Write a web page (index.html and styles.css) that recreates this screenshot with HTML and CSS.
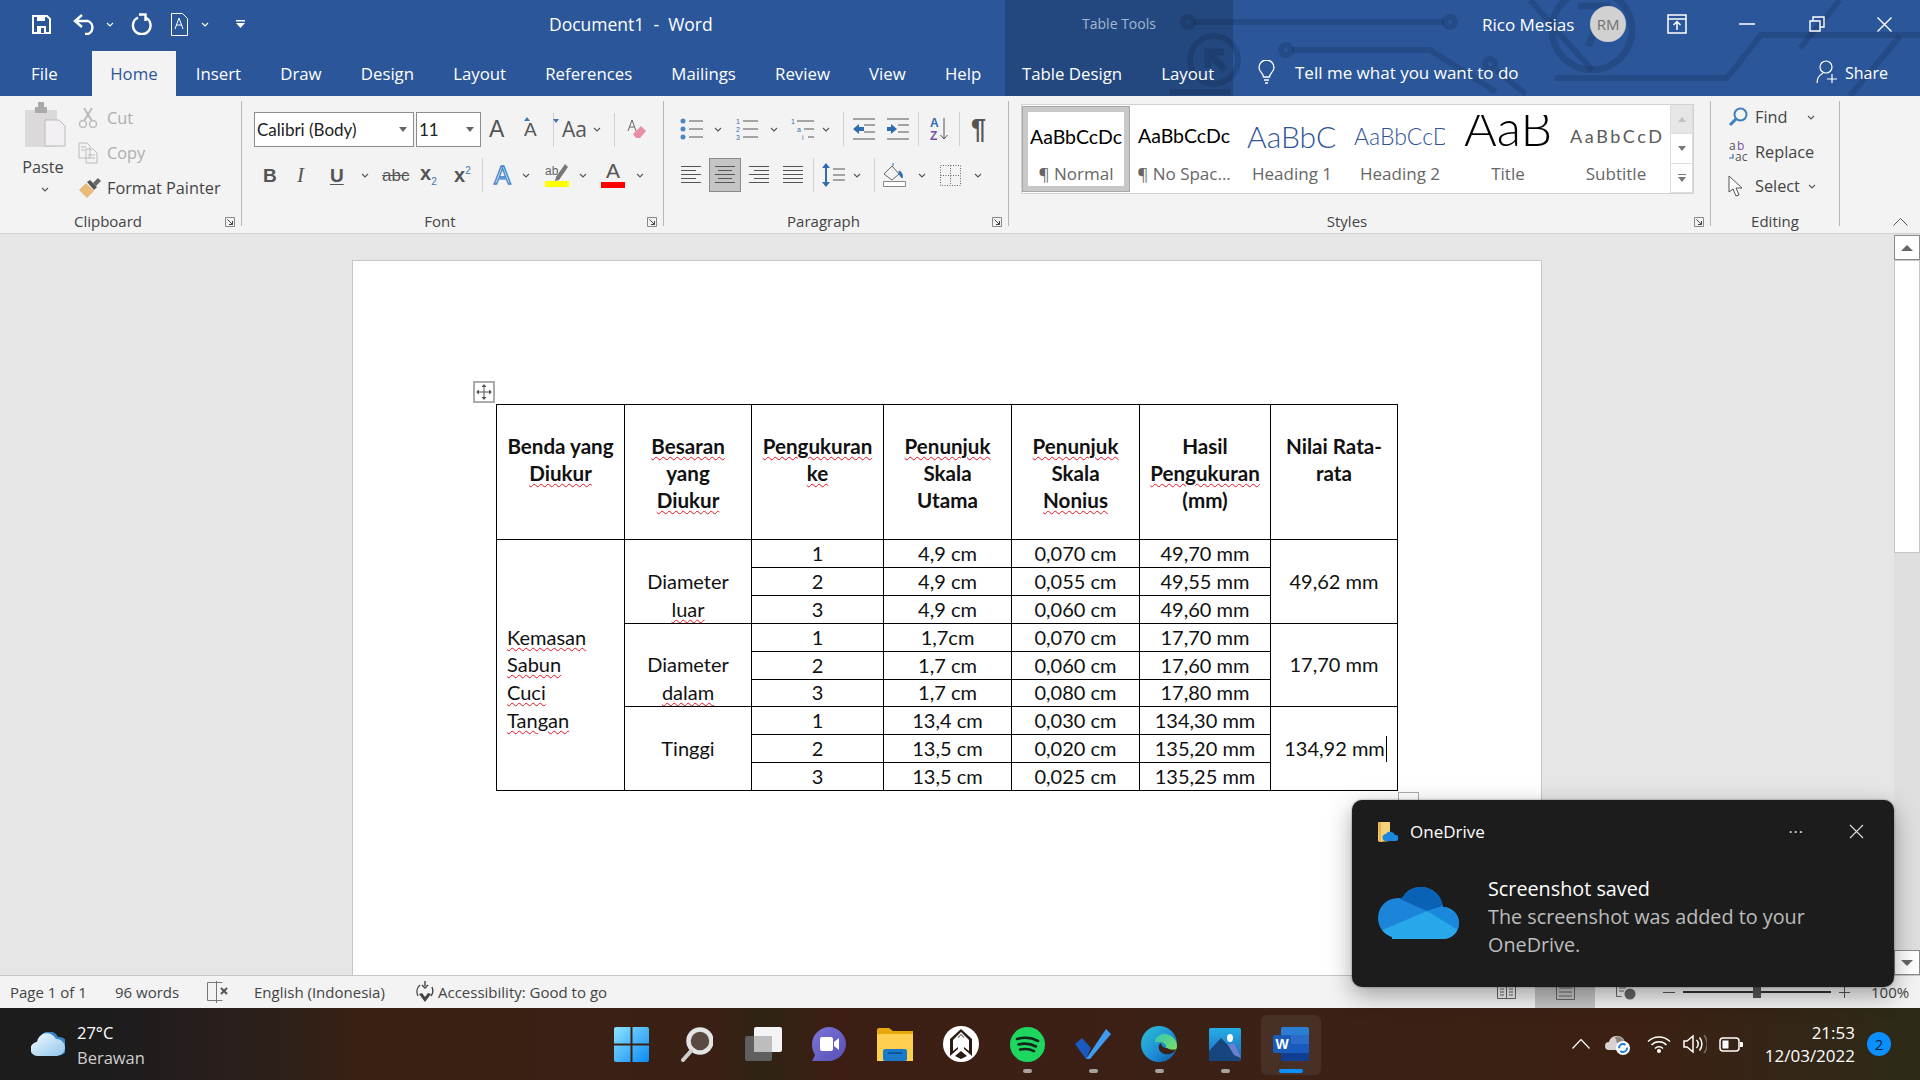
FILE: index.html
```html
<!DOCTYPE html>
<html lang="en">
<head>
  <meta charset="UTF-8">
  <title>Document1 - Word</title>
  <link rel="stylesheet" href="styles.css">
</head>
<body>

<svg class="sprite" width="0" height="0">
  <symbol id="chev" viewBox="0 0 8 5"><path d="M1 1l3 3 3-3" fill="none" stroke="#555" stroke-width="1.1"/></symbol>
  <symbol id="launch" viewBox="0 0 10 10"><path d="M.5 9.5v-9h9v9z" fill="none" stroke="#888"/><path d="M2.5 2.5l5 5M4 7.5h3.5V4" fill="none" stroke="#444"/></symbol>
  <symbol id="lines" viewBox="0 0 20 20"><path d="M0 1.500h20M0 5.500h20M0 9.500h20M0 13.500h20M0 17.500h20" stroke="#555"/></symbol>
</svg>

<div class="app">

  <!-- Cabecera azul -->
  <header class="header">
    <svg class="circuit" width="1920" height="96" viewBox="0 0 1920 96">
      <g fill="none" stroke="#000" stroke-opacity=".13" stroke-width="6">
        <circle cx="1188" cy="22" r="5"/>
        <path d="M1194 22h250"/><circle cx="1450" cy="22" r="5"/>
        <circle cx="1214" cy="60" r="24"/>
        <path d="M1208 68V52h16M1208 52l17 18" stroke-width="7"/>
        <circle cx="1286" cy="50" r="5"/>
        <path d="M1292 50h138l66 42M1170 92h60"/>
        <circle cx="1592" cy="30" r="40" stroke-width="7"/>
        <path d="M1578 6h28l-18 40" stroke-width="7"/>
        <path d="M1555 78h172l34-43h159"/>
        <circle cx="1490" cy="64" r="5"/>
        <path d="M1496 70l30 24M1530 0l62 70"/>
        <path d="M1800 48l40-48M1850 96l50-60"/>
      </g>
    </svg>

    <div class="titlebar">
      <svg width="19" height="19" viewBox="0 0 19 19"><path d="M1 1h14l3 3v14H1z" fill="none" stroke="#fff" stroke-width="2"/><path d="M5 1h8v5H5zM5 11h9v7H5z" fill="#fff"/><path d="M9 13h3v5H9z" fill="#2b579a"/></svg>
      <svg width="24" height="22" viewBox="0 0 24 22"><path d="M9 2L2 8l7 6M2 8h13a7 7 0 0 1 0 13h-3" fill="none" stroke="#fff" stroke-width="2.4"/></svg>
      <svg class="chev-w" width="8" height="5"><use href="#chev"/></svg>
      <svg width="21" height="22" viewBox="0 0 21 22"><path d="M7 4.500a8.800 8.800 0 1 0 7.500 0M8 1.500h6.500V8" fill="none" stroke="#fff" stroke-width="2.400"/></svg>
      <svg width="17" height="23" viewBox="0 0 17 23"><path d="M.5.500h11l5 5v17H.5z" fill="none" stroke="#fff"/><path d="M4 16L8 5l4 11M5.500 12h5" fill="none" stroke="#fff"/></svg>
      <svg class="chev-w" width="8" height="5"><use href="#chev"/></svg>
      <svg width="9" height="8" viewBox="0 0 9 8"><path d="M0 0h9v1.500H0zM0 3h9L4.500 8z" fill="#fff"/></svg>
      <div class="doc-title">Document1&nbsp; -&nbsp; Word</div>
      <div class="ctx-title">Table Tools</div>
      <div class="user-name">Rico Mesias</div>
      <div class="avatar">RM</div>
      <svg width="20" height="20" viewBox="0 0 20 20"><path d="M1 1h18v18H1zM1 5h18" fill="none" stroke="#fff" stroke-width="1.5"/><path d="M10 16V8M6.500 11L10 7.500l3.500 3.500" fill="none" stroke="#fff" stroke-width="1.5"/></svg>
      <svg width="16" height="2" viewBox="0 0 16 2"><path d="M0 1h16" stroke="#fff" stroke-width="1.5"/></svg>
      <svg width="16" height="16" viewBox="0 0 16 16"><path d="M1 5h10v10H1zM4 5V1h11v10h-4" fill="none" stroke="#fff" stroke-width="1.4"/></svg>
      <svg width="15" height="15" viewBox="0 0 15 15"><path d="M.5.500l14 14M14.500.500l-14 14" stroke="#fff" stroke-width="1.4"/></svg>
    </div>

    <nav class="tabbar">
      <div class="main-tabs">
        <div class="tab">File</div>
        <div class="tab active">Home</div>
        <div class="tab">Insert</div>
        <div class="tab">Draw</div>
        <div class="tab">Design</div>
        <div class="tab">Layout</div>
        <div class="tab">References</div>
        <div class="tab">Mailings</div>
        <div class="tab">Review</div>
        <div class="tab">View</div>
        <div class="tab">Help</div>
      </div>
      <div class="ctx-tabs">
        <div class="tab">Table Design</div>
        <div class="tab">Layout</div>
      </div>
      <svg class="bulb" width="17" height="24" viewBox="0 0 17 24"><path d="M5.500 17c0-4-4.500-5-4.500-9.500a7.500 7.500 0 0 1 15 0C16 12 11.500 13 11.500 17zM6 20h5M7 23h3" fill="none" stroke="#fff" stroke-width="1.3"/></svg>
      <div class="tell-me">Tell me what you want to do</div>
      <svg class="share-ic" width="21" height="24" viewBox="0 0 21 24"><circle cx="10" cy="7" r="6" fill="none" stroke="#fff" stroke-width="1.2"/><path d="M1 23c0-6 3-8 6-10M21 19H11M16 14v9" fill="none" stroke="#fff" stroke-width="1.2"/></svg>
      <div class="share">Share</div>
    </nav>
  </header>

  <!-- Cinta de opciones -->
  <section class="ribbon">

    <div class="group clipboard">
      <div class="group-body clip-body">
        <div class="paste">
          <svg width="41" height="45" viewBox="0 0 41 45"><path d="M0 8h32v37H0z" fill="#dcd9da"/><path d="M10 5h12v6H10z" fill="#aaa"/><path d="M13 0h6v6h-6z" fill="#aaa"/><path d="M20 18h14l6 6v20H20z" fill="#f3eff4" stroke="#bbb"/></svg>
          <div class="paste-label">Paste</div>
          <svg width="8" height="5"><use href="#chev"/></svg>
        </div>
        <ul class="clip-list">
          <li class="disabled">
            <svg width="20" height="21" viewBox="0 0 20 21"><circle cx="5" cy="17" r="3.5" fill="none" stroke="#bbb" stroke-width="1.5"/><circle cx="15" cy="17" r="3.5" fill="none" stroke="#bbb" stroke-width="1.5"/><path d="M6 14L14 1M14 14L6 1" stroke="#bbb" stroke-width="2"/></svg>
            Cut
          </li>
          <li class="disabled">
            <svg width="20" height="22" viewBox="0 0 20 22"><path d="M1 1h8l3 3v12H1zM8 7h7l4 4v10H8z" fill="#f3f3f3" stroke="#bbb"/><path d="M3 5h5M3 8h4M10 13h7M10 16h7" stroke="#bbb"/></svg>
            Copy
          </li>
          <li>
            <svg width="24" height="21" viewBox="0 0 24 21"><path d="M1 13l7-7 8 8-7 7z" fill="#e9bb78"/><path d="M9 5l7 8 3-3-7-7z" fill="#555"/><path d="M15 6l5-5 3 3-5 5z" fill="#666"/></svg>
            Format Painter
          </li>
        </ul>
      </div>
      <div class="group-label"><span>Clipboard</span><svg class="launcher" width="10" height="10"><use href="#launch"/></svg></div>
    </div>

    <div class="group font">
      <div class="group-body">
        <div class="tool-row font-row1">
          <div class="combo combo-name">Calibri (Body)<i></i></div>
          <div class="combo combo-size">11<i></i></div>
          <div class="glyph big-a">A<b class="tri-up"></b></div>
          <div class="glyph small-a">A<b class="tri-down"></b></div>
          <div class="sep"></div>
          <div class="glyph case-a">Aa</div>
          <svg width="8" height="5"><use href="#chev"/></svg>
          <div class="sep"></div>
          <svg width="20" height="22" viewBox="0 0 20 22"><path d="M1 12L5 1l4 11M2.500 8h5" fill="none" stroke="#666"/><path d="M9 19l-3-4 8-8 5 5-6 7z" fill="#e88fa4"/></svg>
        </div>
        <div class="tool-row font-row2">
          <div class="glyph fmt-b">B</div>
          <div class="glyph fmt-i">I</div>
          <div class="glyph fmt-u">U</div>
          <svg width="8" height="5"><use href="#chev"/></svg>
          <div class="glyph fmt-s">abc</div>
          <div class="glyph fmt-x">x<sub>2</sub></div>
          <div class="glyph fmt-x">x<sup>2</sup></div>
          <div class="sep"></div>
          <div class="glyph fmt-effect">A</div>
          <svg width="8" height="5"><use href="#chev"/></svg>
          <svg width="24" height="24" viewBox="0 0 24 24"><text x="0" y="12" font-family="Liberation Sans" font-size="12" fill="#666">ab</text><path d="M11 14l9-13 3 3-9 13-4 1z" fill="#777"/><path d="M0 18h24v6H0z" fill="#ff0"/></svg>
          <svg width="8" height="5"><use href="#chev"/></svg>
          <div class="font-color">A<i></i></div>
          <svg width="8" height="5"><use href="#chev"/></svg>
        </div>
      </div>
      <div class="group-label"><span>Font</span><svg class="launcher" width="10" height="10"><use href="#launch"/></svg></div>
    </div>

    <div class="group paragraph">
      <div class="group-body">
        <div class="tool-row para-row1">
          <svg width="23" height="22" viewBox="0 0 23 22"><g fill="#4a86c5"><circle cx="3" cy="3" r="2.5"/><circle cx="3" cy="11" r="2.5"/><circle cx="3" cy="19" r="2.5"/></g><path d="M9 3h14M9 11h14M9 19h14" stroke="#555"/></svg>
          <svg width="8" height="5"><use href="#chev"/></svg>
          <svg width="23" height="22" viewBox="0 0 23 22"><g fill="#2e6cb0" font-family="Liberation Sans" font-size="7"><text x="1" y="6">1</text><text x="1" y="14">2</text><text x="1" y="22">3</text></g><path d="M8 3h15M8 11h15M8 19h15" stroke="#555"/></svg>
          <svg width="8" height="5"><use href="#chev"/></svg>
          <svg width="23" height="22" viewBox="0 0 23 22"><g fill="#2e6cb0" font-family="Liberation Sans" font-size="7"><text x="0" y="6">1</text><text x="6" y="14">a</text><text x="11" y="22">i</text></g><path d="M6 3h17M13 11h10M17 19h6" stroke="#555"/></svg>
          <svg width="8" height="5"><use href="#chev"/></svg>
          <div class="sep"></div>
          <svg width="22" height="22" viewBox="0 0 22 22"><path d="M0 1h22M11 7h11M11 14h11M0 21h22" stroke="#555"/><path d="M0 11l6-5v3h5v4H6v3z" fill="#2e6cb0"/></svg>
          <svg width="22" height="22" viewBox="0 0 22 22"><path d="M0 1h22M11 7h11M11 14h11M0 21h22" stroke="#555"/><path d="M10 11L4 6v3H0v4h4v3z" fill="#2e6cb0"/></svg>
          <div class="sep"></div>
          <svg width="18" height="24" viewBox="0 0 18 24"><text x="0" y="10" font-family="Liberation Sans" font-weight="700" font-size="12" fill="#2e6cb0">A</text><text x="0" y="23" font-family="Liberation Sans" font-weight="700" font-size="12" fill="#7b4ea3">Z</text><path d="M14 1v21M10.500 18l3.500 4 3.500-4" fill="none" stroke="#555"/></svg>
          <div class="sep"></div>
          <div class="pilcrow">¶</div>
        </div>
        <div class="tool-row para-row2">
          <svg class="align" width="20" height="20" viewBox="0 0 20 20"><path d="M0 1.500h20M0 5.500h15M0 9.500h20M0 13.500h15M0 17.500h20" stroke="#555"/></svg>
          <div class="align-on"><svg width="20" height="20" viewBox="0 0 20 20"><path d="M0 1.500h20M3 5.500h14M0 9.500h20M3 13.500h14M0 17.500h20" stroke="#555"/></svg></div>
          <svg width="20" height="20" viewBox="0 0 20 20"><path d="M0 1.500h20M5 5.500h15M0 9.500h20M5 13.500h15M0 17.500h20" stroke="#555"/></svg>
          <svg width="20" height="20"><use href="#lines"/></svg>
          <div class="sep"></div>
          <svg width="23" height="24" viewBox="0 0 23 24"><path d="M4 0l4 5H5v14h3l-4 5-4-5h3V5H0z" fill="#2e6cb0"/><path d="M11 6h12M11 12h12M11 17h12" stroke="#555"/></svg>
          <svg width="8" height="5"><use href="#chev"/></svg>
          <div class="sep"></div>
          <svg width="23" height="24" viewBox="0 0 23 24"><path d="M1 11l8-8 7 8-7 6z" fill="none" stroke="#666"/><path d="M10 3V0M16 8c3 1 4 5 3 7-2-2-3-4-3-7z" stroke="#2e6cb0" fill="#2e6cb0"/><path d="M.5 18.500h22v5H.5z" fill="#fff" stroke="#888"/></svg>
          <svg width="8" height="5"><use href="#chev"/></svg>
          <svg width="21" height="21" viewBox="0 0 21 21"><path d="M.5.500h20v20H.5zM.5 10.500h20M10.500.5v20" fill="none" stroke="#666" stroke-dasharray="1 1.5"/></svg>
          <svg width="8" height="5"><use href="#chev"/></svg>
        </div>
      </div>
      <div class="group-label"><span>Paragraph</span><svg class="launcher" width="10" height="10"><use href="#launch"/></svg></div>
    </div>

    <div class="group styles">
      <div class="group-body">
        <div class="gallery">
          <div class="style-item selected"><div class="preview pv-normal">AaBbCcDc</div><div class="style-name">¶ Normal</div></div>
          <div class="style-item"><div class="preview pv-normal">AaBbCcDc</div><div class="style-name">¶ No Spac...</div></div>
          <div class="style-item"><div class="preview pv-h1">AaBbCc</div><div class="style-name">Heading 1</div></div>
          <div class="style-item"><div class="preview pv-h2">AaBbCcD</div><div class="style-name">Heading 2</div></div>
          <div class="style-item"><div class="preview pv-title">AaB</div><div class="style-name">Title</div></div>
          <div class="style-item"><div class="preview pv-sub">AaBbCcD</div><div class="style-name">Subtitle</div></div>
          <div class="gallery-scroll">
            <div class="gs-btn gs-up"><b class="tri-gs up"></b></div>
            <div class="gs-btn"><b class="tri-gs"></b></div>
            <div class="gs-btn"><b class="gs-more"></b><b class="tri-gs"></b></div>
          </div>
        </div>
      </div>
      <div class="group-label"><span>Styles</span><svg class="launcher" width="10" height="10"><use href="#launch"/></svg></div>
    </div>

    <div class="group editing">
      <div class="group-body edit-body">
        <div class="edit-row">
          <svg width="20" height="20" viewBox="0 0 20 20"><circle cx="12.5" cy="7.500" r="6" fill="none" stroke="#3f7fbf" stroke-width="2"/><path d="M8 12l-6 6" stroke="#3f7fbf" stroke-width="3"/></svg>
          <span>Find</span>
          <svg class="edit-chev" width="8" height="5"><use href="#chev"/></svg>
        </div>
        <div class="edit-row">
          <svg width="23" height="22" viewBox="0 0 23 22"><text x="1" y="9" font-family="Open Sans" font-size="12" fill="#555">a</text><text x="9" y="9" font-family="Open Sans" font-size="12" fill="#7b4ea3">b</text><text x="7" y="20" font-family="Open Sans" font-size="12" fill="#555">ac</text><path d="M5 13v4H1" fill="none" stroke="#2e6cb0" stroke-width="1.2"/></svg>
          <span>Replace</span>
        </div>
        <div class="edit-row">
          <svg width="16" height="22" viewBox="0 0 16 22"><path d="M1 1v16l4-3 3 7 3-1-3-7h6z" fill="#fff" stroke="#555"/></svg>
          <span>Select</span>
          <svg class="edit-chev2" width="8" height="5"><use href="#chev"/></svg>
        </div>
      </div>
      <div class="group-label"><span>Editing</span></div>
    </div>

    <div class="collapse">
      <svg width="15" height="8" viewBox="0 0 15 8"><path d="M.5 7.500l7-7 7 7" fill="none" stroke="#555"/></svg>
    </div>
  </section>

  <!-- Zona del documento -->
  <main class="doc-area">
    <div class="page">
      <div class="table-wrap">
        <div class="move-handle">
          <svg width="16" height="16" viewBox="0 0 16 16"><path d="M8 0l2.500 3h-5zM8 16l-2.500-3h5zM0 8l3-2.500v5zM16 8l-3-2.500v5z" fill="#555"/><path d="M8 2v12M2 8h12" stroke="#555"/></svg>
        </div>
        <table class="data">
          <colgroup><col class="c1"><col class="c2"><col class="c3"><col class="c4"><col class="c5"><col class="c6"><col class="c7"></colgroup>
          <tr class="head">
            <th>Benda yang<br><u>Diukur</u></th>
            <th><u>Besaran</u><br>yang<br><u>Diukur</u></th>
            <th><u>Pengukuran</u><br><u>ke</u></th>
            <th><u>Penunjuk</u><br>Skala<br>Utama</th>
            <th><u>Penunjuk</u><br>Skala<br><u>Nonius</u></th>
            <th>Hasil<br><u>Pengukuran</u><br>(mm)</th>
            <th>Nilai Rata-<br>rata</th>
          </tr>
          <tr>
            <td rowspan="9" class="item"><u>Kemasan</u><br><u>Sabun</u><br><u>Cuci</u><br><u>Tangan</u></td>
            <td rowspan="3" class="bottom">Diameter<br><u>luar</u></td>
            <td>1</td><td>4,9 cm</td><td>0,070 cm</td><td>49,70 mm</td>
            <td rowspan="3">49,62 mm</td>
          </tr>
          <tr><td>2</td><td>4,9 cm</td><td>0,055 cm</td><td>49,55 mm</td></tr>
          <tr><td>3</td><td>4,9 cm</td><td>0,060 cm</td><td>49,60 mm</td></tr>
          <tr>
            <td rowspan="3" class="bottom">Diameter<br><u>dalam</u></td>
            <td>1</td><td>1,7cm</td><td>0,070 cm</td><td>17,70 mm</td>
            <td rowspan="3">17,70 mm</td>
          </tr>
          <tr><td>2</td><td>1,7 cm</td><td>0,060 cm</td><td>17,60 mm</td></tr>
          <tr class="short"><td>3</td><td>1,7 cm</td><td>0,080 cm</td><td>17,80 mm</td></tr>
          <tr>
            <td rowspan="3">Tinggi</td>
            <td>1</td><td>13,4 cm</td><td>0,030 cm</td><td>134,30 mm</td>
            <td rowspan="3" class="current">134,92 mm<span class="caret"></span></td>
          </tr>
          <tr><td>2</td><td>13,5 cm</td><td>0,020 cm</td><td>135,20 mm</td></tr>
          <tr><td>3</td><td>13,5 cm</td><td>0,025 cm</td><td>135,25 mm</td></tr>
        </table>
        <div class="resize-handle"></div>
      </div>
    </div>
    <aside class="scrollbar">
      <div class="sb-btn"><b class="sb-up"></b></div>
      <div class="sb-thumb"></div>
      <div class="sb-track"></div>
      <div class="sb-btn"><b class="sb-down"></b></div>
    </aside>
  </main>

  <!-- Barra de estado -->
  <footer class="statusbar">
    <span class="st-page">Page 1 of 1</span>
    <span class="st-words">96 words</span>
    <svg class="st-proof" width="21" height="22" viewBox="0 0 21 22"><path d="M.5 1.500h9v18h-9zM9.500 1.500h6M9.500 19.500h6M9.500 0v22" fill="none" stroke="#777"/><path d="M14 7l6 6M20 7l-6 6" stroke="#555" stroke-width="2"/></svg>
    <span class="st-lang">English (Indonesia)</span>
    <svg class="st-acc" width="22" height="24" viewBox="0 0 22 24"><path d="M4 16A9 9 0 0 1 6 5M18 7a9 9 0 0 1-1 9" fill="none" stroke="#444" stroke-width="1.4"/><path d="M11 1v5M8 5l3 3 3-3" fill="none" stroke="#444" stroke-width="1.4"/><path d="M5 14l6 8 6-8-3-1-3 4-3-4z" fill="#444"/></svg>
    <span>Accessibility: Good to go</span>
    <div class="st-right">
      <svg class="st-read" width="19" height="16" viewBox="0 0 19 16"><path d="M.5 1.500h18v13H.5zM9.500 1.500v13M3 5h4M3 8h4M3 11h4M12 5h4M12 8h4M12 11h4" fill="none" stroke="#666"/></svg>
      <div class="st-print"><svg width="19" height="16" viewBox="0 0 19 16"><path d="M.5.500h18v15H.5zM3 4h13M3 8h13M3 12h13" fill="none" stroke="#666"/></svg></div>
      <svg class="st-web" width="20" height="16" viewBox="0 0 20 16"><path d="M.5.500h11M.5.500v12h5M3 4h7M3 7h5" fill="none" stroke="#666"/><circle cx="14" cy="10" r="5.5" fill="#666"/></svg>
      <div class="zoom-minus"></div>
      <div class="zoom-track"><i></i></div>
      <div class="zoom-plus"></div>
      <span class="zoom-val">100%</span>
    </div>
  </footer>

  <!-- Barra de tareas -->
  <div class="taskbar">
    <div class="weather">
      <svg width="34" height="24" viewBox="0 0 34 24"><defs><linearGradient id="wx" x1="0" y1="0" x2="1" y2="1"><stop offset="0" stop-color="#f4fbff"/><stop offset="1" stop-color="#8fc6ec"/></linearGradient></defs><path d="M7 24a7 7 0 0 1-1-14 10 10 0 0 1 19-4 9 9 0 0 1 2 18z" fill="#3d86c6" transform="translate(2 -1)"/><path d="M7 24a7 7 0 0 1-1-14 10 10 0 0 1 19-3 8.500 8.500 0 0 1 1 17z" fill="url(#wx)"/></svg>
      <div class="wx-text"><div class="wx-temp">27°C</div><div class="wx-desc">Berawan</div></div>
    </div>

    <div class="apps">
      <div class="app-btn">
        <svg width="35" height="35" viewBox="0 0 35 35"><defs><linearGradient id="st" x1="0" y1="0" x2="1" y2="1"><stop offset="0" stop-color="#8fe3fb"/><stop offset="1" stop-color="#0a8bf5"/></linearGradient></defs><path d="M0 2a2 2 0 0 1 2-2h14.500v16.500H0zM18.500 0H33a2 2 0 0 1 2 2v14.500H18.500zM0 18.500h16.500V35H2a2 2 0 0 1-2-2zM18.500 18.500H35V33a2 2 0 0 1-2 2H18.500z" fill="url(#st)"/></svg>
      </div>
      <div class="app-btn">
        <svg width="32" height="35" viewBox="0 0 32 35"><circle cx="19" cy="14" r="11.5" fill="#5a4a42" stroke="#e4e4e4" stroke-width="4.5"/><path d="M10 24L2 33" stroke="#cfcfcf" stroke-width="4" stroke-linecap="round"/></svg>
      </div>
      <div class="app-btn">
        <svg width="37" height="35" viewBox="0 0 37 35"><rect y="9" width="27" height="25" rx="2" fill="#5f5f5f"/><rect x="9" y="0" width="28" height="25" rx="2" fill="#f4f4f4"/><rect x="9" y="9" width="18" height="16" fill="#bdbdbd"/></svg>
      </div>
      <div class="app-btn">
        <svg width="34" height="35" viewBox="0 0 34 35"><defs><linearGradient id="ch" x1="0" y1="0" x2="1" y2="1"><stop offset="0" stop-color="#7a75d8"/><stop offset="1" stop-color="#5a4fb5"/></linearGradient></defs><path d="M17 0c9 0 17 8 17 17s-8 17-17 17H0l3-6C1 25 0 21 0 17 0 8 8 0 17 0z" fill="url(#ch)"/><rect x="8" y="10" width="13" height="14" rx="2" fill="#fff"/><path d="M22 15l5-4v12l-5-4z" fill="#fff"/></svg>
      </div>
      <div class="app-btn">
        <svg width="36" height="33" viewBox="0 0 36 33"><path d="M0 2a2 2 0 0 1 2-2h10l4 3h20v30H0z" fill="#e8a90f"/><path d="M0 6h36v27H0z" fill="#ffd050"/><rect x="6" y="21" width="24" height="12" rx="2" fill="#1b79c9"/><path d="M11 25h14" stroke="#0c4c8a" stroke-width="1.5"/></svg>
      </div>
      <div class="app-btn">
        <svg width="36" height="36" viewBox="0 0 36 36"><circle cx="18" cy="18" r="18" fill="#fff"/><path d="M18 3L7 13v17l8-7V12l3-3 3 3v11l8 7V13zM18 25l-6 5 6 3 6-3z" fill="#2a1b14"/><path d="M18 6l8 8v11l-5-4V11l-3-3-3 3v10l-5 4V14z" fill="#fff"/></svg>
      </div>
      <div class="app-btn">
        <svg width="35" height="35" viewBox="0 0 35 35"><circle cx="17.5" cy="17.500" r="17.5" fill="#1ed760"/><path d="M7 12c7-2 14-2 21 2M8.500 17.500c6-1.500 12-1 17.500 2M10 22.500c5-1 10-.7 14 1.700" fill="none" stroke="#15241a" stroke-width="2.6" stroke-linecap="round"/></svg>
        <i class="dot"></i>
      </div>
      <div class="app-btn">
        <svg width="36" height="30" viewBox="0 0 36 30"><path d="M0 15l7-6 9 10-5 11z" fill="#185abd"/><path d="M11 30L31 0l5 5-21 25z" fill="#3e9bf0"/></svg>
        <i class="dot"></i>
      </div>
      <div class="app-btn">
        <svg width="36" height="36" viewBox="0 0 36 36"><defs><linearGradient id="ed" x1="0" y1="0" x2="1" y2="1"><stop offset="0" stop-color="#2cc3d0"/><stop offset=".55" stop-color="#1f8fd8"/><stop offset="1" stop-color="#0c59a4"/></linearGradient><linearGradient id="ed2" x1="0" y1="0" x2="1" y2="1"><stop offset="0" stop-color="#36c6b6"/><stop offset="1" stop-color="#7fe05a"/></linearGradient></defs><circle cx="18" cy="18" r="18" fill="url(#ed)"/><path d="M14 16c0-5 6-9 11-8 6 1 11 6 11 12 0 4-3 6-7 6-3 0-5-2-4-5 0-3-3-5-6-5-2 0-4 0-5 0z" fill="url(#ed2)"/><path d="M26 22c-3 0-6-2-6-5-2 1-3 3-2 6 1 4 6 6 11 5 3-1 5-3 6-5-2 1-6 1-9-1z" fill="#3a2015"/></svg>
        <i class="dot"></i>
      </div>
      <div class="app-btn">
        <svg width="32" height="33" viewBox="0 0 32 33"><defs><linearGradient id="ph" x1="0" y1="0" x2="0" y2="1"><stop offset="0" stop-color="#25aee8"/><stop offset="1" stop-color="#1e66b8"/></linearGradient></defs><rect width="32" height="33" rx="1.5" fill="url(#ph)"/><ellipse cx="21" cy="10" rx="3" ry="4" fill="#fff"/><path d="M0 33V23L12 10l20 20v3z" fill="#17457f"/><path d="M19 17l6-2 7 15-7-3z" fill="#6f7fd0"/></svg>
        <i class="dot"></i>
      </div>
      <div class="app-btn word-btn">
        <svg width="36" height="34" viewBox="0 0 36 34"><rect x="8" y="0" width="28" height="34" rx="2" fill="#2b7cd3"/><rect x="8" y="8" width="28" height="9" fill="#2b6cc8"/><rect x="8" y="17" width="28" height="9" fill="#185abd"/><rect x="8" y="26" width="28" height="8" fill="#103f91"/><rect y="8" width="18" height="18" rx="1.5" fill="#1a5cb8"/><text x="9" y="22" text-anchor="middle" font-family="Liberation Sans" font-weight="700" font-size="14" fill="#fff">W</text></svg>
        <i class="running"></i>
      </div>
    </div>

    <div class="tray">
      <svg width="18" height="10" viewBox="0 0 18 10"><path d="M.5 9.500l8.500-9 8.500 9" fill="none" stroke="#fff" stroke-width="1.2"/></svg>
      <svg width="25" height="22" viewBox="0 0 25 22"><path d="M4 17a4 4 0 0 1 0-8 7 7 0 0 1 7-6 8 8 0 0 1 9 6v8z" fill="#d7d2cf"/><path d="M10 4a7 7 0 0 1 9 4l-7 2z" fill="#8d8581"/><circle cx="18" cy="15" r="7" fill="#fff"/><circle cx="18" cy="15" r="4" fill="none" stroke="#1a7fe0" stroke-width="2" stroke-dasharray="9 3"/></svg>
      <svg width="24" height="18" viewBox="0 0 24 18"><path d="M1 6.500a15.500 15.500 0 0 1 22 0M4.500 10a10.500 10.500 0 0 1 15 0M8 13.500a5.500 5.500 0 0 1 8 0" fill="none" stroke="#fff" stroke-width="1.5"/><circle cx="12" cy="16" r="2" fill="#fff"/></svg>
      <svg width="24" height="20" viewBox="0 0 24 20"><path d="M1 7h3l6-5v16l-6-5H1z" fill="none" stroke="#fff" stroke-width="1.5"/><path d="M13.500 6a5.500 5.500 0 0 1 0 8M16.500 3.500a10 10 0 0 1 0 13" fill="none" stroke="#fff" stroke-width="1.5"/><path d="M21 1a14 14 0 0 1 0 18" fill="none" stroke="#7a6a60" stroke-width="1.5"/></svg>
      <div class="tray-batt">
        <svg width="24" height="15" viewBox="0 0 24 15"><rect x="1" y="1" width="19" height="13" rx="3" fill="none" stroke="#fff" stroke-width="1.5"/><rect x="3.5" y="3.500" width="6" height="8" fill="#fff"/><path d="M21 5h2a1 1 0 0 1 1 1v3a1 1 0 0 1-1 1h-2z" fill="#fff"/></svg>
        <div class="clock"><div>21:53</div><div>12/03/2022</div></div>
      </div>
      <div class="badge">2</div>
    </div>
  </div>

  <!-- Notificación -->
  <div class="toast">
    <div class="toast-head">
      <svg width="20" height="21" viewBox="0 0 20 21"><path d="M0 1h12v19l-10 1-2-1z" fill="#f6d27a"/><path d="M0 1h3v20H1z" fill="#e9b44c"/><path d="M8 20a3.500 3.500 0 0 1 0-7 5 5 0 0 1 9 1 3 3 0 0 1 1 6z" fill="#1c88dc"/></svg>
      <span class="toast-app">OneDrive</span>
      <span class="toast-more">···</span>
      <svg class="toast-x" width="15" height="15" viewBox="0 0 15 15"><path d="M1 1l13 13M14 1L1 14" stroke="#ddd" stroke-width="1.1"/></svg>
    </div>
    <div class="toast-body">
      <svg class="toast-cloud" width="82" height="52" viewBox="0 0 82 52">
        <defs><clipPath id="cloud"><circle cx="43" cy="22" r="22"/><circle cx="20" cy="31" r="20"/><circle cx="65" cy="36" r="16"/><rect x="14" y="30" width="52" height="22"/></clipPath></defs>
        <g clip-path="url(#cloud)">
          <rect width="82" height="52" fill="#1c85da"/>
          <path d="M15 0h55l-5 19-16 5-27-12z" fill="#0a62b6"/>
          <path d="M49 24l16-5h17v25z" fill="#1a88dc"/>
          <path d="M0 45l49-21 33 20v8H0z" fill="#28a8ea"/>
        </g>
      </svg>
      <div class="toast-text">
        <div class="toast-title">Screenshot saved</div>
        <div class="toast-msg">The screenshot was added to your OneDrive.</div>
      </div>
    </div>
  </div>

</div>

</body>
</html>
```

FILE: styles.css
```css
* {
  box-sizing: border-box;
}

body {
  margin: 0;
  font-family: "Open Sans", sans-serif;
  background: #e6e6e6;
  overflow: hidden;
}

.sprite {
  position: absolute;
}

svg {
  display: block;
}

.app {
  position: relative;
  width: 1920px;
  height: 1080px;
  display: flex;
  flex-direction: column;
  overflow: hidden;
}

/* Cabecera */
.header {
  position: relative;
  height: 96px;
  background: #2b579a;
  color: #fff;
  flex: none;
}

.circuit {
  position: absolute;
  top: 0;
  left: 0;
}

.titlebar {
  position: relative;
  height: 48px;
  padding-left: 32px;
  display: grid;
  grid-template-columns: 41px 33px 25px 40px 30px 35px 313px 456px 477px 108px 77px 72px 70px 68px auto;
  align-items: center;
  font-size: 17px;
}

.chev-w {
  filter: brightness(0) invert(1);
}

.doc-title {
  font-size: 17.5px;
  white-space: nowrap;
}

.ctx-title {
  width: 228px;
  height: 48px;
  line-height: 48px;
  text-align: center;
  font-size: 14px;
  color: #a5b7d1;
  background: rgba(0, 0, 0, 0.17);
}

.user-name {
  white-space: nowrap;
}

.avatar {
  width: 36px;
  height: 36px;
  border-radius: 50%;
  background: #d1d1d1;
  color: #707070;
  font-size: 15px;
  line-height: 36px;
  text-align: center;
}

.tabbar {
  position: relative;
  height: 48px;
  display: flex;
  align-items: stretch;
  font-size: 16.8px;
}

.main-tabs {
  width: 1005px;
  flex: none;
  padding-left: 11.5px;
  display: flex;
}

.tab {
  padding: 3px 19.6px 0;
  line-height: 45px;
  white-space: nowrap;
}

.tab.active {
  background: #f3f3f3;
  color: #2b579a;
  padding: 0 18px;
  margin: 3px 0.5px 0 15px;
  line-height: 45px;
}

.ctx-tabs {
  width: 228px;
  flex: none;
  display: flex;
  background: rgba(0, 0, 0, 0.17);
}

.ctx-tabs .tab:first-child {
  padding-left: 17px;
}

.bulb {
  align-self: center;
  margin-left: 25px;
}

.tell-me {
  margin-left: 20px;
  padding-top: 2px;
  line-height: 45px;
  font-size: 17px;
  white-space: nowrap;
}

.share-ic {
  align-self: center;
  margin-left: auto;
}

.share {
  margin: 0 32px 0 8px;
  padding-top: 3px;
  line-height: 45px;
  font-size: 16px;
}

/* Cinta */
.ribbon {
  height: 138px;
  flex: none;
  background: #f3f3f3;
  border-bottom: 1px solid #d2d2d2;
  display: flex;
  font-size: 16.3px;
  color: #444;
}

.group {
  height: 125px;
  margin-top: 5px;
  border-right: 1px solid #b8b8b8;
  display: flex;
  flex-direction: column;
}

.clipboard { width: 242px; }
.font { width: 422px; }
.paragraph { width: 345px; }
.styles { width: 702px; }
.editing { width: 129px; }

.group-body {
  flex: 1;
  min-height: 0;
}

.group-label {
  height: 20px;
  margin: -1px 0 -5px;
  display: flex;
  align-items: center;
  font-size: 15px;
  white-space: nowrap;
}

.group-label span {
  flex: 1;
  text-align: center;
}

.launcher {
  margin: 2px 6px 0 9px;
}

.clip-body {
  display: flex;
  padding-left: 22px;
}

.paste {
  width: 46px;
  display: flex;
  flex-direction: column;
  align-items: center;
  margin-right: 10px;
  padding-top: 1px;
}

.paste-label {
  margin: 10px 0 10px -4px;
  line-height: 20px;
}

.clip-list {
  list-style: none;
  margin: -1px 0 0;
  padding: 0;
}

.clip-list li {
  height: 35px;
  display: grid;
  grid-template-columns: 29px auto;
  align-items: center;
  white-space: nowrap;
}

.clip-list .disabled {
  color: #adadad;
}

.tool-row {
  display: grid;
  align-items: center;
  height: 34px;
}

.font-row1 {
  margin: 11px 0 12px 12px;
  grid-template-columns: 162px 73px 35px 29px 9px 31px 21px 13px auto;
}

.font-row2 {
  margin-left: 21px;
  grid-template-columns: 34px 33px 31px 21px 38px 34px 28px 12px 28px 23px 34px 22px 35px auto;
}

.para-row1 {
  margin: 11px 0 12px 16px;
  grid-template-columns: 34px 21px 35px 21px 31px 21px 10px 34px 31px 12px 29px 12px auto;
}

.para-row2 {
  margin-left: 17px;
  grid-template-columns: 28px 40px 34px 30px 9px 31px 21px 9px 35px 22px 34px auto;
}

.combo {
  position: relative;
  height: 35px;
  background: #fff;
  border: 1px solid #8c8c8c;
  padding-left: 2px;
  line-height: 34px;
  font-family: "Lato", sans-serif;
  font-size: 17px;
  color: #222;
  white-space: nowrap;
}

.combo i {
  position: absolute;
  right: 6px;
  top: 14px;
  border: 4px solid transparent;
  border-top: 5px solid #666;
  border-bottom: 0;
}

.combo-name { width: 160px; }
.combo-size { width: 65px; }

.sep {
  width: 1px;
  height: 34px;
  background: #d0d0d0;
}

.glyph {
  position: relative;
  color: #555;
  line-height: 1;
  font-family: "Liberation Sans", sans-serif;
}

.big-a { font-size: 23px; }
.small-a { font-size: 19px; }
.case-a { font-size: 21px; font-family: "Open Sans", sans-serif; }

.tri-up, .tri-down {
  position: absolute;
  right: -6px;
  top: -1px;
  border: 3px solid transparent;
}

.tri-up { border-bottom: 4px solid #3a76b8; border-top: 0; }
.tri-down { border-top: 4px solid #3a76b8; border-bottom: 0; }

.fmt-b { font-size: 19px; font-weight: 700; }
.fmt-i { font-size: 21px; font-style: italic; font-family: "Liberation Serif", serif; }
.fmt-u { font-size: 19px; text-decoration: underline; text-underline-offset: 2px; font-weight: 700; }
.fmt-s { font-size: 17px; text-decoration: line-through; }
.fmt-x { font-size: 20px; font-weight: 700; }
.fmt-x sub, .fmt-x sup { font-size: 10px; font-weight: 400; color: #3a76b8; }
.fmt-effect { font-size: 25px; color: #dcebf8; -webkit-text-stroke: 1.3px #3f86c8; }

.font-color {
  width: 24px;
  text-align: center;
  font-family: "Liberation Sans", sans-serif;
  font-size: 21px;
  line-height: 18px;
  color: #555;
}

.font-color i {
  display: block;
  height: 6px;
  margin-top: 2px;
  background: #f00;
}

.pilcrow {
  font-family: "Liberation Sans", sans-serif;
  font-size: 27px;
  font-weight: 700;
  color: #555;
  line-height: 30px;
}

.align-on {
  width: 32px;
  height: 34px;
  background: #c5c5c5;
  border: 1px solid #8a8a8a;
  display: flex;
  align-items: center;
  justify-content: center;
}

/* Galería de estilos */
.gallery {
  width: 673px;
  height: 90px;
  margin: 3px 0 0 12px;
  background: #fff;
  border: 1px solid #d2d2d2;
  display: flex;
}

.style-item {
  width: 108px;
  flex: none;
  padding: 6px 6px 0;
  overflow: hidden;
}

.style-item.selected {
  margin: 1px 0;
  padding: 0 5px;
  border: 6px solid #c8c8c8;
  outline: 1px solid #a8a8a8;
  outline-offset: -1px;
}

.preview {
  height: 50px;
  line-height: 50px;
  overflow: hidden;
  white-space: nowrap;
  color: #000;
  font-family: "Lato", sans-serif;
  text-align: center;
}

.selected .preview {
  height: 49px;
  line-height: 49px;
  margin: 0 -8px;
}

.pv-normal { font-size: 19.5px; margin: 0 -4px; }
.pv-h1 { font-size: 30px; color: #2f5496; font-weight: 300; text-align: left; margin: 0 3px; }
.pv-h2 { font-size: 23px; color: #2f5496; font-weight: 300; text-align: left; margin: 0 3px 0 2px; }
.pv-title { font-size: 50px; font-weight: 300; height: 46px; line-height: 25px; margin-top: 4px; }
.pv-sub { font-size: 18px; color: #5a5a5a; letter-spacing: 2.6px; text-align: left; margin: 0 0 0 2px; }

.style-name {
  text-align: center;
  font-size: 17px;
  color: #666;
  white-space: nowrap;
  line-height: 26px;
}

.gallery-scroll {
  width: 23px;
  margin-left: auto;
  display: flex;
  flex-direction: column;
}

.gs-btn {
  flex: 1;
  border: 1px solid #dedede;
  border-top: 0;
  display: flex;
  flex-direction: column;
  align-items: center;
  justify-content: center;
  gap: 2px;
}

.gs-up {
  background: #e6e6e6;
}

.tri-gs {
  border: 4px solid transparent;
  border-top: 5px solid #777;
  border-bottom: 0;
}

.tri-gs.up {
  border-top: 0;
  border-bottom: 5px solid #c2c2c2;
}

.gs-more {
  width: 8px;
  height: 1px;
  background: #777;
}

/* Edición */
.edit-body {
  margin-top: -1px;
  padding-left: 17px;
}

.edit-row {
  height: 34.5px;
  display: grid;
  grid-template-columns: 27px auto 1fr;
  align-items: center;
  white-space: nowrap;
}

.edit-chev {
  margin-left: 20px;
}

.edit-chev2 {
  margin-left: 8px;
}

.collapse {
  flex: 1;
  display: flex;
  justify-content: flex-end;
  align-items: flex-end;
  padding: 0 12px 7px 0;
}

/* Documento */
.doc-area {
  flex: 1;
  min-height: 0;
  display: flex;
  justify-content: space-between;
  padding: 0 0 0 352px;
  background: #e6e6e6;
}

.page {
  width: 1190px;
  margin-top: 26px;
  background: #fff;
  border: 1px solid #c6c6c6;
  border-bottom: 0;
  padding: 143px 0 0 143px;
}

.table-wrap {
  position: relative;
  width: 902px;
}

.move-handle {
  position: absolute;
  left: -23px;
  top: -23px;
  width: 22px;
  height: 22px;
  background: #fff;
  border: 2px solid #aaa;
  display: flex;
  align-items: center;
  justify-content: center;
}

.resize-handle {
  position: absolute;
  left: 902px;
  top: 388px;
  width: 21px;
  height: 12px;
  background: #fff;
  border: 1px solid #aaa;
}

table.data {
  width: 902px;
  table-layout: fixed;
  border-collapse: collapse;
  font-family: "Lato", sans-serif;
  font-size: 20px;
  color: #111;
}

.c1 { width: 128px; }
.c2 { width: 127px; }
.c3 { width: 132px; }
.c4 { width: 128px; }
.c5 { width: 128px; }
.c6 { width: 131px; }
.c7 { width: 127px; }

table.data th,
table.data td {
  border: 1px solid #000;
  padding: 0;
  text-align: center;
}

table.data tr {
  height: 28px;
}

table.data tr.short {
  height: 27px;
}

table.data tr.head {
  height: 135px;
}

table.data th {
  vertical-align: top;
  padding-top: 28px;
  line-height: 27.2px;
  font-size: 20.6px;
  font-weight: 700;
}

table.data td {
  padding-bottom: 1px;
  line-height: 25px;
}

table.data td.item {
  text-align: left;
  padding: 28px 0 0 10px;
  line-height: 27.7px;
}

table.data td.bottom {
  vertical-align: bottom;
  padding-bottom: 0;
  line-height: 28px;
}

table.data td.current {
  padding-left: 3px;
}

u {
  text-decoration: underline wavy #e81123 1px;
  text-underline-offset: 2px;
}

/* el margen negativo evita que el cursor agrande la línea */
.caret {
  display: inline-block;
  width: 1px;
  height: 26px;
  margin: -10px 0 -6px 1px;
  background: #000;
}

.scrollbar {
  width: 26px;
  padding-top: 1px;
  background: #dfdfdf;
  display: flex;
  flex-direction: column;
}

.sb-btn {
  height: 25px;
  background: #fff;
  border: 1px solid #8a8a8a;
  display: flex;
  align-items: center;
  justify-content: center;
}

.sb-up {
  border: 6px solid transparent;
  border-bottom: 6px solid #666;
  border-top: 0;
}

.sb-down {
  border: 6px solid transparent;
  border-top: 6px solid #666;
  border-bottom: 0;
}

.sb-thumb {
  height: 293px;
  background: #fff;
  border: 1px solid #c6c6c6;
}

.sb-track {
  flex: 1;
}

/* Barra de estado */
.statusbar {
  height: 33px;
  flex: none;
  background: #f3f3f3;
  border-top: 1px solid #c6c6c6;
  padding-left: 10px;
  display: flex;
  align-items: center;
  font-size: 15px;
  color: #444;
  white-space: nowrap;
}

.st-page { width: 105px; }
.st-words { width: 92px; }
.st-proof { margin-right: 26px; }
.st-lang { width: 160px; }
.st-acc { margin-right: 2px; }

.st-right {
  margin-left: auto;
  height: 100%;
  display: flex;
  align-items: center;
  padding-right: 11px;
}

.st-read { margin-right: 19px; }

.st-print {
  width: 60px;
  height: 100%;
  background: #c5c5c5;
  display: flex;
  align-items: center;
  justify-content: center;
}

.st-web { margin: 0 27px 0 21px; }

.zoom-minus {
  width: 12px;
  height: 1px;
  background: #555;
  margin-right: 8px;
}

.zoom-track {
  position: relative;
  width: 148px;
  height: 2px;
  background: #333;
}

.zoom-track i {
  position: absolute;
  left: 70px;
  top: -5px;
  width: 8px;
  height: 12px;
  background: #555;
}

.zoom-plus {
  width: 11px;
  height: 11px;
  margin: 0 21px 0 8px;
  background: linear-gradient(#555, #555) center / 100% 1px no-repeat,
              linear-gradient(#555, #555) center / 1px 100% no-repeat;
}

.zoom-val {
  width: 38px;
}

/* Barra de tareas */
.taskbar {
  height: 72px;
  flex: none;
  display: grid;
  grid-template-columns: 1fr auto 1fr;
  align-items: center;
  color: #fff;
  background: linear-gradient(90deg, #1c1c1c 0, #1e1c1c 130px, #2a1f1c 230px, #2c2018 280px, #3a2013 370px, #3b2015 600px, #3a1f14 720px, #2f2414 760px, #3c1e14 830px, #3b2116 1300px, #3c2014 1640px, #2e2a18 1900px, #2d2a18 1920px);
}

.weather {
  display: flex;
  align-items: center;
  padding-left: 31px;
}

.wx-text {
  margin: 2px 0 0 12px;
  font-size: 16.5px;
  line-height: 25px;
}

.wx-desc {
  color: #cfcfcf;
}

.apps {
  display: flex;
  margin-left: 2px;
}

.app-btn {
  position: relative;
  width: 66px;
  height: 72px;
  display: flex;
  align-items: center;
  justify-content: center;
}

.word-btn::before {
  content: "";
  position: absolute;
  left: 3px;
  top: 7px;
  width: 60px;
  height: 60px;
  border-radius: 6px;
  background: rgba(255, 255, 255, 0.07);
}

.word-btn svg {
  position: relative;
}

.dot {
  position: absolute;
  left: 28.5px;
  bottom: 7px;
  width: 9px;
  height: 4px;
  border-radius: 2px;
  background: #a9a19c;
}

.running {
  position: absolute;
  left: 21px;
  bottom: 7px;
  width: 24px;
  height: 4px;
  border-radius: 2px;
  background: #0a90ff;
}

.tray {
  display: grid;
  grid-template-columns: 33px 42px 36px 36px auto auto;
  justify-content: end;
  align-items: center;
  padding-right: 29px;
}

.tray-batt {
  width: 136px;
  display: flex;
  align-items: center;
  justify-content: space-between;
}

.clock {
  text-align: right;
  font-size: 17px;
  line-height: 23px;
  white-space: nowrap;
}

.badge {
  width: 24px;
  height: 24px;
  margin-left: 12px;
  border-radius: 50%;
  background: #0a8fff;
  color: #06223a;
  font-size: 15px;
  line-height: 24px;
  text-align: center;
}

/* Notificación */
.toast {
  position: absolute;
  left: 1352px;
  top: 800px;
  width: 542px;
  height: 187px;
  padding: 21px 26px 0;
  border-radius: 10px;
  background: #1c1c1c;
  color: #fff;
  box-shadow: 0 0 2px rgba(0, 0, 0, 0.5), 0 8px 24px rgba(0, 0, 0, 0.35);
}

.toast-head {
  display: flex;
  align-items: center;
  height: 21px;
}

.toast-app {
  margin-left: 12px;
  font-size: 17px;
}

.toast-more {
  margin-left: auto;
  font-size: 16px;
  letter-spacing: 1px;
  margin-right: 45px;
  color: #ddd;
}

.toast-x {
  margin-right: 4px;
}

.toast-body {
  display: flex;
  margin-top: 34px;
}

.toast-cloud {
  margin-top: 11px;
  flex: none;
}

.toast-text {
  margin: -1px 0 0 28px;
  width: 350px;
  font-size: 19.8px;
  line-height: 28px;
}

.toast-msg {
  color: #bdbdbd;
}
```
